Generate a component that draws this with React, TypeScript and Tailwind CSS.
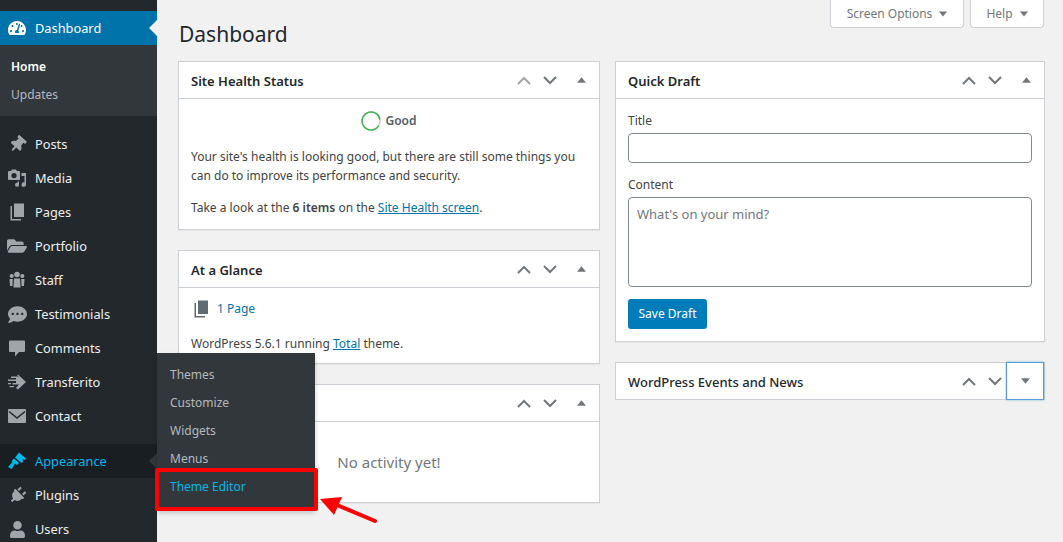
import type { ReactNode } from 'react';
import { FaTachometerAlt, FaThumbtack, FaFolderOpen, FaCommentDots, FaUser, FaPlug } from 'react-icons/fa';

const Svg = ({ children }: { children: ReactNode }) => (
  <svg viewBox="0 0 20 20" width="20" height="20" fill="currentColor">{children}</svg>
);

const MediaIcon = () => (
  <Svg>
    <path d="M2 3h2l1-1.500h4L10 3h2a1 1 0 0 1 1 1v7a1 1 0 0 1-1 1H2a1 1 0 0 1-1-1V4a1 1 0 0 1 1-1zm5 2a2.600 2.600 0 1 0 0 5.200A2.600 2.600 0 0 0 7 5z" fillRule="evenodd" />
    <path d="M14.500 5H19v11.500a2.200 2.200 0 1 1-1.500-2V8h-3zM12 13.500v3.300a2 2 0 1 1-1.500-1.900V13.500z" />
  </Svg>
);
const PagesIcon = () => (
  <Svg>
    <path d="M7 1.500h10v13.500H7z" />
    <path d="M5 4v13h9v1.500H3.500V4z" />
  </Svg>
);
const StaffIcon = () => (
  <Svg>
    <circle cx="10" cy="4.500" r="2.800" />
    <path d="M7 8.500h6l.5 9H6.500z" />
    <circle cx="4.700" cy="6" r="2.100" />
    <path d="M2.500 9h3.300l-.3 7H3z" />
    <circle cx="15.300" cy="6" r="2.100" />
    <path d="M14.200 9h3.300l-.5 7h-2.500z" />
  </Svg>
);
const BubbleIcon = () => (
  <Svg>
    <path d="M3 2.500h14a1 1 0 0 1 1 1V13a1 1 0 0 1-1 1h-5l-4 4.500V14H3a1 1 0 0 1-1-1V3.500a1 1 0 0 1 1-1z" />
  </Svg>
);
const TransferIcon = () => (
  <Svg>
    <path d="M11 2.500l8 7.500-8 7.500-2-1.500 3-3.500H5.500v-1.500H9V9H1V7.500h8V6H4V4.500h8.500L10 3.500z" />
    <path d="M1 11h3v1.300H1zM2.500 14H7v1.300H2.500z" />
  </Svg>
);
const MailIcon = () => (
  <Svg>
    <path d="M2 3h16a1 1 0 0 1 1 1v12a1 1 0 0 1-1 1H2a1 1 0 0 1-1-1V4a1 1 0 0 1 1-1z" />
    <path d="M2 5.500l8 6.500 8-6.500" fill="none" stroke="#23282d" strokeWidth="1.500" />
  </Svg>
);
const BrushIcon = () => (
  <Svg>
    <path d="M12 1.500l7 6-1.500 1.500-2-1 .5 2.500-1.500 1.500-6.500-5.500z" />
    <path d="M7 7.500l5 4.500-2 2-2-1.500-3.500 5.500L1 16l4.500-5L4.500 10z" />
  </Svg>
);

const UpChevron = ({ className = 'text-[#72777c]' }: { className?: string }) => (
  <svg viewBox="0 0 14 9" width="14" height="9" className={className}>
    <path d="M1 8l6-6 6 6" fill="none" stroke="currentColor" strokeWidth="2" />
  </svg>
);
const DownChevron = () => (
  <svg viewBox="0 0 14 9" width="14" height="9" className="ml-[12px] text-[#72777c]">
    <path d="M1 1l6 6 6-6" fill="none" stroke="currentColor" strokeWidth="2" />
  </svg>
);

const Chevrons = ({ upClass }: { upClass?: string }) => (
  <div className="flex items-center">
    <UpChevron className={upClass} />
    <DownChevron />
    <svg viewBox="0 0 10 6" width="9" height="6" className="ml-[20px] mr-[13px] text-[#72777c]">
      <path d="M0 6h10L5 0z" fill="currentColor" />
    </svg>
  </div>
);

const NAV_TOP = [
  { label: 'Posts', icon: <FaThumbtack size={17} className="rotate-[42deg]" /> },
  { label: 'Media', icon: <MediaIcon /> },
  { label: 'Pages', icon: <PagesIcon /> },
  { label: 'Portfolio', icon: <FaFolderOpen size={20} /> },
  { label: 'Staff', icon: <StaffIcon /> },
  { label: 'Testimonials', icon: <FaCommentDots size={19} /> },
  { label: 'Comments', icon: <BubbleIcon /> },
  { label: 'Transferito', icon: <TransferIcon /> },
  { label: 'Contact', icon: <MailIcon /> },
];

const NavItem = ({ label, icon }: { label: string; icon: ReactNode }) => (
  <div className="flex h-[34px] items-center text-[#eeeeee]">
    <span className="flex w-[35px] justify-center pl-[1px] pr-[2px] text-[#a0a5aa]">{icon}</span>
    <span className="pt-[2px]">{label}</span>
  </div>
);

const Sidebar = () => (
  <aside className="relative w-[157px] shrink-0 bg-[#23282d] pt-[11px] text-[12.8px]">
    <div className="relative flex h-[34px] items-center bg-[#0073aa] text-white">
      <span className="flex w-[35px] justify-center pr-[2px]"><FaTachometerAlt size={18} /></span>
      <span className="pt-[2px]">Dashboard</span>
      <span className="absolute right-0 top-[9px] h-0 w-0 border-y-[8px] border-r-[8px] border-y-transparent border-r-[#f1f1f1]" />
    </div>
    <div className="flex h-[71px] flex-col justify-center bg-[#32373c] pl-[11px] text-[12px] leading-[28px]">
      <span className="font-semibold text-white">Home</span>
      <span className="text-[#b4b9be]">Updates</span>
    </div>
    <div className="mt-[11px]">
      {NAV_TOP.map((item) => <NavItem key={item.label} {...item} />)}
    </div>
    <div className="mt-[11px]">
      <div className="relative flex h-[34px] items-center bg-[#191e23] text-[#00b9eb]">
        <span className="flex w-[35px] justify-center pr-[2px]"><BrushIcon /></span>
        <span className="pt-[2px]">Appearance</span>
        <span className="absolute right-0 top-[9px] h-0 w-0 border-y-[8px] border-r-[8px] border-y-transparent border-r-[#32373c]" />
      </div>
      <NavItem label="Plugins" icon={<FaPlug size={17} className="rotate-[45deg]" />} />
      <NavItem label="Users" icon={<FaUser size={17} />} />
    </div>
  </aside>
);

const Flyout = () => (
  <div className="absolute left-[157px] top-[353px] h-[157px] w-[158px] bg-[#32373c] pt-[8px] text-[12px] shadow-[0_3px_5px_rgba(0,0,0,0.2)]">
    {['Themes', 'Customize', 'Widgets', 'Menus'].map((label) => (
      <div key={label} className="flex h-[28px] items-center pl-[13px] text-[#b4b9be]">{label}</div>
    ))}
    <div className="flex h-[28px] items-center pl-[13px] text-[#00b9eb]">Theme Editor</div>
  </div>
);

const Card = ({ title, className = '', chevrons, children }: { title?: string; className?: string; chevrons?: ReactNode; children?: ReactNode }) => (
  <section className={`border border-[#ccd0d4] bg-white shadow-[0_1px_1px_rgba(0,0,0,0.04)] ${className}`}>
    <header className="flex h-[36px] items-center justify-between pl-[12px]">
      <h2 className="pt-[4px] text-[13px] font-semibold text-[#23282d]">{title}</h2>
      {chevrons ?? <Chevrons />}
    </header>
    {children && <div className="border-t border-[#ccd0d4]">{children}</div>}
  </section>
);

export default function App() {
  return (
    <div className="relative flex h-[542px] w-[1063px] overflow-hidden bg-[#f1f1f1] font-['Noto_Sans',sans-serif] text-[12px] text-[#444444]">
      <Sidebar />
      <main className="flex-1 pl-[21px]">
        <div className="flex justify-end gap-[6px] pr-[19px]">
          <button className="flex h-[28px] w-[134px] items-center justify-center gap-[7px] rounded-b-[4px] border border-t-0 border-[#ccd0d4] bg-white text-[#72777c]">
            Screen Options
            <svg viewBox="0 0 10 6" width="8" height="6" className="text-[#72777c]"><path d="M0 0h10L5 6z" fill="currentColor" /></svg>
          </button>
          <button className="flex h-[28px] w-[74px] items-center justify-center gap-[7px] rounded-b-[4px] border border-t-0 border-[#ccd0d4] bg-white text-[#72777c]">
            Help
            <svg viewBox="0 0 10 6" width="8" height="6" className="text-[#72777c]"><path d="M0 0h10L5 6z" fill="currentColor" /></svg>
          </button>
        </div>
        <h1 className="ml-[1px] h-[33px] text-[21px] leading-[12px] text-[#23282d]">Dashboard</h1>
        <div className="flex gap-[15px]">
          <div className="flex w-[422px] flex-col gap-[20px]">
            <Card title="Site Health Status" className="h-[169px]" chevrons={<Chevrons upClass="text-[#a0a5aa]" />}>
              <div className="flex h-[43px] items-center justify-center gap-[4px]">
                <svg viewBox="0 0 20 20" width="20" height="20">
                  <circle cx="10" cy="10" r="9" fill="none" stroke="#ccd0d4" strokeWidth="1.500" />
                  <circle cx="10" cy="10" r="9" fill="none" stroke="#46b450" strokeWidth="1.500" strokeDasharray="50 57" transform="rotate(30 10 10)" />
                </svg>
                <span className="font-semibold text-[#555d66]">Good</span>
              </div>
              <p className="mt-[5px] px-[12px] leading-[19px]">Your site's health is looking good, but there are still some things you can do to improve its performance and security.</p>
              <p className="mt-[13px] px-[12px] leading-[19px]">Take a look at the <b className="font-semibold">6 items</b> on the <a className="text-[#0073aa] underline">Site Health screen</a>.</p>
            </Card>
            <Card title="At a Glance" className="h-[114px]">
              <div className="flex h-[41px] items-center pl-[12px] text-[#0073aa]">
                <span className="flex w-[26px] text-[#606a73]"><PagesIcon /></span>
                1 Page
              </div>
              <p className="mt-[6px] px-[12px]">WordPress 5.6.1 running <a className="text-[#0073aa] underline">Total</a> theme.</p>
            </Card>
            <Card className="h-[119px]">
              <div className="flex h-[80px] items-center justify-center text-[15px] text-[#72777c]">No activity yet!</div>
            </Card>
          </div>
          <div className="flex w-[430px] flex-col gap-[20px]">
            <Card title="Quick Draft" className="h-[281px]">
              <div className="px-[12px] pt-[12px]">
                <label className="block pt-[2px] leading-[16px]">Title</label>
                <div className="mt-[4px] h-[30px] rounded-[4px] border border-[#7e8993] bg-white" />
                <label className="mt-[12px] block pt-[2px] leading-[16px]">Content</label>
                <div className="mt-[4px] h-[90px] rounded-[4px] border border-[#7e8993] bg-white px-[8px] pb-[6px] pt-[7px] text-[13px] text-[#72777c]">What's on your mind?</div>
                <button className="mt-[12px] h-[30px] w-[79px] rounded-[3px] bg-[#007cba] text-white">Save Draft</button>
              </div>
            </Card>
            <section className="flex h-[38px] items-center justify-between border border-[#ccd0d4] bg-white pl-[12px]">
              <h2 className="pt-[4px] text-[13px] font-medium text-[#23282d]">WordPress Events and News</h2>
              <div className="flex h-full items-center">
                <UpChevron />
                <DownChevron />
                <span className="ml-[4px] flex h-[38px] w-[38px] items-center justify-center border border-[#5b9dd9] shadow-[0_0_2px_rgba(30,140,190,0.6)]">
                  <svg viewBox="0 0 10 6" width="9" height="6" className="text-[#72777c]"><path d="M0 0h10L5 6z" fill="currentColor" /></svg>
                </span>
              </div>
            </section>
          </div>
        </div>
      </main>
      <Flyout />
      {/* annotation drawn on top of the screenshot */}
      <div className="pointer-events-none absolute left-[155px] top-[468px] h-[43px] w-[163px] rounded-[2px] border-4 border-[#ff0000]" />
      <svg className="pointer-events-none absolute left-0 top-0" width="1063" height="542">
        <path d="M320 499L342 497L334 515Z" fill="#ff0000" />
        <path d="M337 505L375 521" stroke="#ff0000" strokeWidth="4" strokeLinecap="round" />
      </svg>
    </div>
  );
}
